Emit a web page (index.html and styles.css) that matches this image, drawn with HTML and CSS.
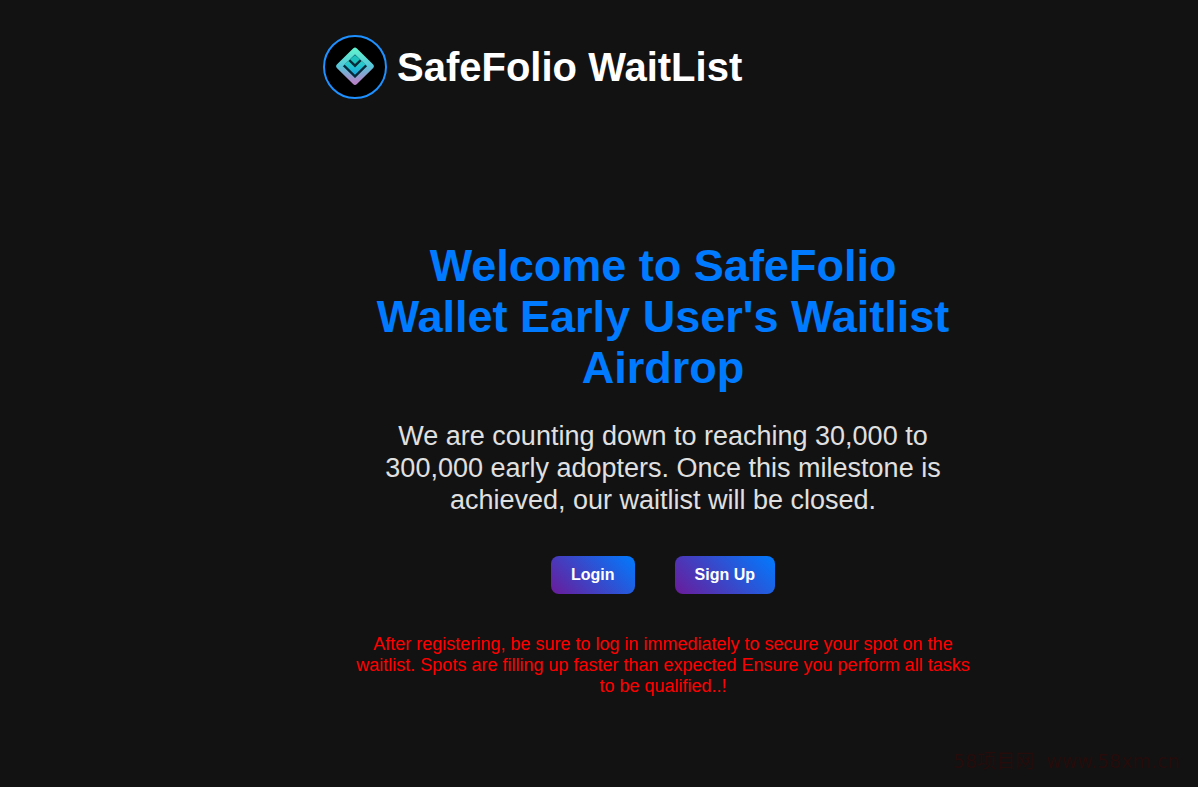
FILE: index.html
```html
<!DOCTYPE html>
<html lang="en">
<head>
  <meta charset="UTF-8" />
  <meta name="viewport" content="width=device-width, initial-scale=1.0"/>
  <title>SafeFolio WaitList</title>

  <link rel="stylesheet" href="styles.css">
</head>
<body>

  <div class="container">
    <header>
      <svg class="logo" viewBox="0 0 60 60" role="img" aria-label="SafeFolio logo">
        <defs>
          <linearGradient id="outer" x1="0" y1="0" x2="0" y2="1">
            <stop offset="0" stop-color="#5ff0cf"/>
            <stop offset="0.5" stop-color="#55c5d8"/>
            <stop offset="1" stop-color="#b584c8"/>
          </linearGradient>
          <linearGradient id="inner" x1="0" y1="0" x2="0" y2="1">
            <stop offset="0" stop-color="#2bd3c6"/>
            <stop offset="1" stop-color="#18a4e0"/>
          </linearGradient>
        </defs>
        <path d="M30 13.5 L46 29.3 L30 45 L14 29.3 Z" fill="#06293a" stroke="url(#outer)" stroke-width="5.5" stroke-linejoin="round"/>
        <path d="M30 18 L35 22.3 L30 27 L25 22.3 Z" fill="#1cc0bd"/>
        <path d="M19.5 27.5 L23.5 24 L30 30.5 L36.5 24 L40.5 27.5 L30 37.8 Z" fill="url(#inner)"/>
      </svg>
      <h1>SafeFolio WaitList</h1>
    </header>

    <main>
      <h2>Welcome to SafeFolio Wallet Early User's Waitlist Airdrop</h2>
      <p class="intro">We are counting down to reaching 30,000 to 300,000 early adopters. Once this milestone is achieved, our waitlist will be closed.</p>

      <div class="buttons">
        <button type="button">Login</button>
        <button type="button">Sign Up</button>
      </div>

      <p class="notice">After registering, be sure to log in immediately to secure your spot on the waitlist. Spots are filling up faster than expected Ensure you perform all tasks to be qualified..!</p>
    </main>
  </div>

  <div class="watermark">58项目网&nbsp; www.58xm.cn</div>

</body>
</html>
```

FILE: styles.css
```css
* {
  box-sizing: border-box;
}

body {
  font-family: Arial, "Liberation Sans", sans-serif;
  background-color: #121212;
  color: white;
  margin: 0;
  padding: 35px 0 0 128px;
}

.container {
  max-width: 680px;
  margin: 0 auto;
}

header {
  display: flex;
  align-items: center;
  gap: 10px;
}

.logo {
  width: 64px;
  height: 64px;
  background-color: black;
  border: 2px solid #1e90ff;
  border-radius: 50%;
}

h1 {
  font-size: 40px;
  margin: 0;
}

main {
  padding: 141px 30px 0;
  text-align: center;
}

h2 {
  color: #007bff;
  font-size: 45px;
  line-height: 51px;
  margin: 0 0 27px;
  padding: 0 20px;
}

.intro {
  color: #e0e0e0;
  font-size: 27px;
  line-height: 32px;
  margin: 0 0 40px;
  padding: 0 20px;
}

.buttons {
  display: flex;
  justify-content: center;
  gap: 40px;
}

button {
  background: linear-gradient(45deg, #6a1b9a, #007bff);
  color: white;
  border: none;
  border-radius: 8px;
  font-family: inherit;
  font-size: 16px;
  font-weight: bold;
  padding: 10px 20px;
  cursor: pointer;
}

button:hover {
  background: linear-gradient(45deg, #007bff, #6a1b9a);
}

.notice {
  color: red;
  font-size: 18px;
  line-height: 21px;
  margin: 40px 0 0;
}

.watermark {
  position: fixed;
  right: 18px;
  bottom: 14px;
  color: #270c0c;
  font-family: "DejaVu Sans", "Noto Sans CJK SC", sans-serif;
  font-size: 19px;
}

@media (max-width: 768px) {
  body {
    padding: 20px;
  }

  main {
    padding: 60px 0 0;
  }
}
```
